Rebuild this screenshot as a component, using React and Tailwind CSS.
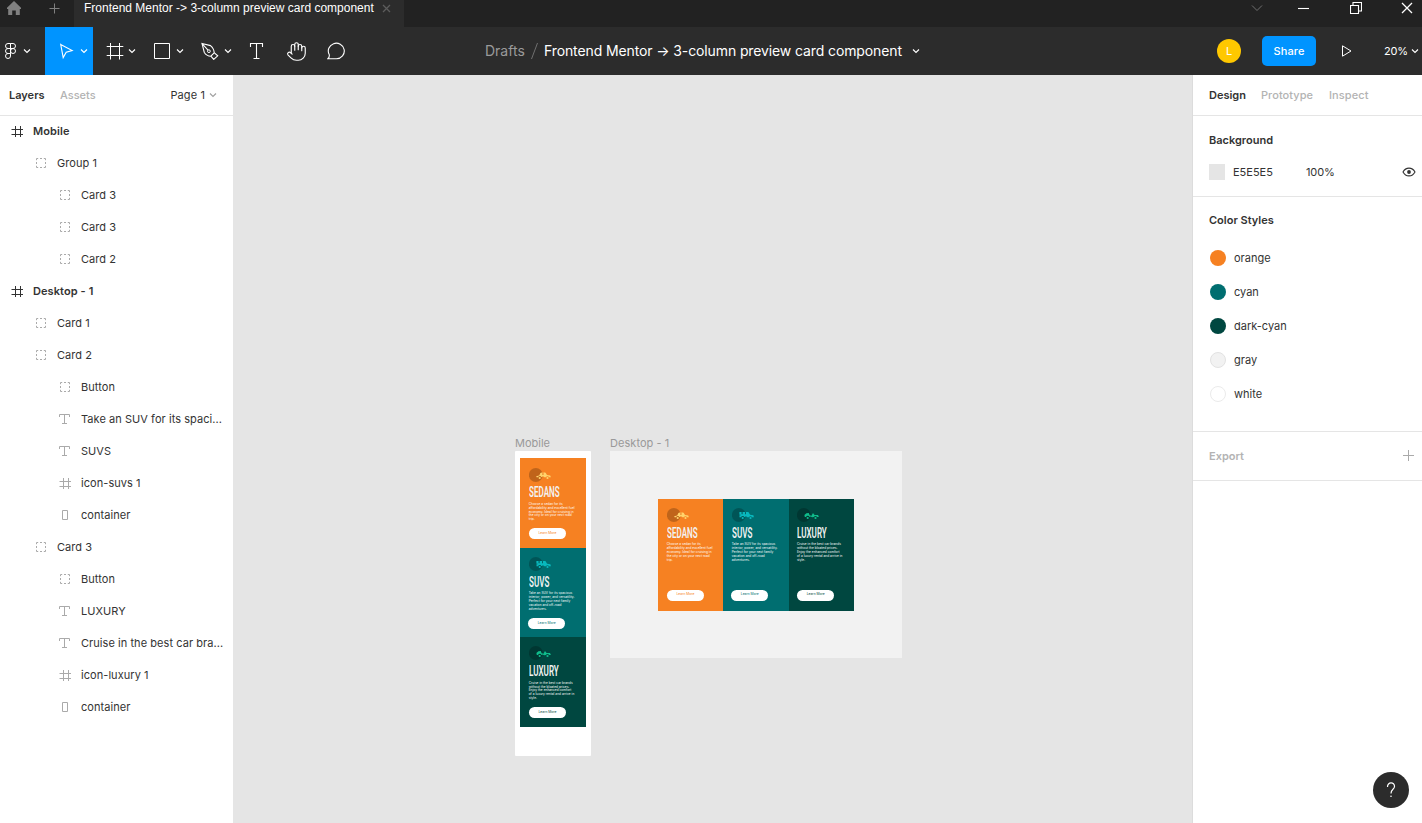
import React from "react";
import { Hand } from "lucide-react";

const Chevron = ({ className = "" }) => (
  <svg className={"shrink-0 " + className} width="8" height="6" viewBox="0 0 8 6" fill="none" stroke="currentColor">
    <path d="M1 1.5 4 4.5 7 1.5" strokeWidth="1.15" />
  </svg>
);

const Tool = ({ className, children }) => (
  <button className={"flex h-12 shrink-0 items-center text-white " + className}>{children}</button>
);

const Icon = ({ w = 18, h = 18, children, className = "" }) => (
  <svg className={"shrink-0 " + className} width={w} height={h} viewBox={`0 0 ${w} ${h}`} fill="none" stroke="currentColor">
    {children}
  </svg>
);

function TitleBar() {
  return (
    <div className="flex h-[27px] shrink-0 bg-[#222222]">
      <div className="flex h-4 w-[74px] items-center text-[#808080]">
        <svg className="ml-[7px]" width="14" height="14" viewBox="0 0 14 14" fill="currentColor">
          <path d="M7 0 0 6.7V8h1.2v6h4V9.5h3.6V14h4V8H14V6.7Z" />
        </svg>
        <Icon w={11} h={11} className="ml-7">
          <path d="M5.5 0.5v10M0.5 5.5h10" />
        </Icon>
      </div>
      <div className="flex h-full w-[330px] bg-[#2c2c2c] pl-[10px]">
        <div className="flex h-4 items-center">
          <span className="w-[290px] whitespace-nowrap font-['Liberation_Sans',sans-serif] text-[12px] leading-4 text-white">
            Frontend Mentor -&gt; 3-column preview card component
          </span>
          <Icon w={9} h={9} className="ml-2 text-[#5c5c5c]">
            <path d="M1 1l7 7M8 1 1 8" strokeWidth="1.3" />
          </Icon>
        </div>
      </div>
      <div className="ml-auto flex h-4 items-center pr-[9px] text-white">
        <Icon w={12} h={8} className="text-[#707070]">
          <path d="M1 1.5 6 6.5l5-5" />
        </Icon>
        <Icon w={11} h={11} className="ml-[35px]">
          <path d="M0 5.5h11" strokeWidth="1.1" />
        </Icon>
        <Icon w={12} h={12} className="ml-[41px]">
          <path d="M0.5 3.5h8v8h-8zM3 3V0.5h8.5V9H9" strokeWidth="1.1" />
        </Icon>
        <Icon w={12} h={12} className="ml-[39px]">
          <path d="M1 1l10 10M11 1 1 11" strokeWidth="1.3" />
        </Icon>
      </div>
    </div>
  );
}

function Toolbar() {
  return (
    <div className="flex h-12 shrink-0 items-center bg-[#2c2c2c]">
      <Tool className="w-[45px] pl-[5px]">
        <Icon w={12} h={18}>
          <path d="M5.5 1.5H3a2.5 2.5 0 0 0 0 5h2.5zM5.5 1.5H8a2.5 2.5 0 0 1 0 5H5.5zM5.5 6.5H3a2.5 2.5 0 0 0 0 5h2.5zM5.5 11.5H3A2.5 2.5 0 1 0 5.5 14z" />
          <circle cx="8" cy="9" r="2.5" />
        </Icon>
        <Chevron className="ml-[6px]" />
      </Tool>
      <Tool className="w-12 bg-[#0094ff] pl-[14px]">
        <Icon w={16} h={18}>
          <path d="M1.7 2.4 13.2 8.6 7.2 10.3 4.2 15.6Z" strokeWidth="1.1" />
        </Icon>
        <Chevron className="ml-[5px]" />
      </Tool>
      <Tool className="w-12 pl-[13px]">
        <Icon>
          <path d="M0.7 4.5h16.6M0.7 13.5h16.6M4.5 1v16.5M13.5 1v16.5" />
        </Icon>
        <Chevron className="ml-1" />
      </Tool>
      <Tool className="w-12 pl-[12px]">
        <Icon>
          <path d="M1.5 1.5h15v15h-15z" />
        </Icon>
        <Chevron className="ml-[5px]" />
      </Tool>
      <Tool className="w-12 pl-[12px]">
        <Icon>
          <path d="M1 1.500 9.5 3.600Q13 6.500 13.200 10.800L9.800 14.200Q5.500 14 3.300 10.500ZM1 1.500l6 6.600M13.400 10.800l3.300 3-4 3.600-2.800-3.200" strokeWidth="1.1" />
          <circle cx="7.900" cy="9.200" r="1.400" />
        </Icon>
        <Chevron className="ml-[5px]" />
      </Tool>
      <Tool className="w-10 pl-[10px]">
        <Icon>
          <path d="M3.5 5V1.5h12V5M9.500 1.500v15M6.500 16.500h6" strokeWidth="1.1" />
        </Icon>
      </Tool>
      <Tool className="w-10 pl-[9px]">
        <Hand size={21} strokeWidth={1.3} />
      </Tool>
      <Tool className="w-10 pl-[10px]">
        <Icon>
          <path d="M.9 16.8c1.1-.9 1.6-2.2 1.4-4A8 7.8 0 1 1 9.5 16.8Z" strokeWidth="1.1" />
        </Icon>
      </Tool>
      <div className="ml-32 flex items-center whitespace-nowrap text-[14px] text-white">
        <span className="w-[40px] -translate-y-px text-[#9a9a9a]">Drafts</span>
        <svg className="ml-[5px]" width="9" height="18" viewBox="0 0 9 18" fill="none" stroke="#707070">
          <path d="M1.5 17 7.5 1" />
        </svg>
        <span className="ml-[5px] w-[360px] -translate-y-px tracking-[-0.115px]">
          Frontend Mentor → 3-column preview card component
        </span>
        <Chevron className="ml-2" />
      </div>
      <div className="ml-auto flex items-center text-[11px] text-white">
        <span className="flex size-6 items-center justify-center rounded-full bg-[#ffc800]">L</span>
        <button className="ml-[21px] flex h-[30px] w-[54px] items-center justify-center rounded-[5px] bg-[#0094ff] font-medium tracking-[0.01em]">
          Share
        </button>
        <Icon w={12} h={14} className="ml-[25px]">
          <path d="M1.500 1.800v10.400L10 7Z" />
        </Icon>
        <span className="ml-[31px] w-[27px] tracking-[-0.02em]">20%</span>
        <Chevron className="mr-[3px]" />
      </div>
    </div>
  );
}

const layerIcons = {
  frame: <path d="M1.500 4.500h11.500M1.500 9.500h11.500M5.500 1v11M10.500 1v11" />,
  group: (
    <path d="M2.5 3.200V1.5H4.200M6 1.5h2M9.800 1.5h1.700V3.200M11.5 5v2M11.5 8.800v1.700H9.800M8 10.5H6M4.200 10.5H2.500V8.800M2.5 7V5" />
  ),
  text: <path d="M1.5 4V1.5h10V4M6.5 1.5v9M4 10.5h5" />,
  rect: <path d="M4.500 1.5h5v9h-5z" />,
};

const layers = [
  ["frame", 0, "Mobile"],
  ["group", 1, "Group 1"],
  ["group", 2, "Card 3"],
  ["group", 2, "Card 3"],
  ["group", 2, "Card 2"],
  ["frame", 0, "Desktop - 1"],
  ["group", 1, "Card 1"],
  ["group", 1, "Card 2"],
  ["group", 2, "Button"],
  ["text", 2, "Take an SUV for its spaci..."],
  ["text", 2, "SUVS"],
  ["frame", 2, "icon-suvs 1"],
  ["rect", 2, "container"],
  ["group", 1, "Card 3"],
  ["group", 2, "Button"],
  ["text", 2, "LUXURY"],
  ["text", 2, "Cruise in the best car bra..."],
  ["frame", 2, "icon-luxury 1"],
  ["rect", 2, "container"],
];

const indents = ["pl-[10px]", "pl-[34px]", "pl-[58px]"];

function LayersPanel() {
  return (
    <aside className="w-[233px] shrink-0 bg-white">
      <div className="flex h-[41px] items-center border-b border-[#e5e5e5] pr-4 pl-[9px]">
        <span className="w-[51px] font-semibold">Layers</span>
        <span className="font-medium text-[#b3b3b3]">Assets</span>
        <span className="ml-auto tracking-[0.01em]">Page 1</span>
        <Chevron className="ml-1 text-[#a0a0a0]" />
      </div>
      <div className="-mt-px">
        {layers.map(([kind, depth, name], i) => (
          <div key={i} className={"flex h-8 items-center whitespace-nowrap " + indents[depth]}>
            <Icon w={14} h={12} className={depth === 0 ? "text-[#333333]" : "text-[#aaaaaa]"}>
              {layerIcons[kind]}
            </Icon>
            <span className={"ml-[9px] " + (depth === 0 ? "font-semibold tracking-[0.008em]" : "tracking-[0.005em]")}>{name}</span>
          </div>
        ))}
      </div>
    </aside>
  );
}

const cards = {
  sedans: {
    title: "SEDANS",
    bg: "bg-[#f68122]",
    ink: "text-[#f68122]",
    car: "#ffd36b",
    lines: ["Choose a sedan for its", "affordability and excellent fuel", "economy. Ideal for cruising in", "the city or on your next road", "trip."],
  },
  suvs: {
    title: "SUVS",
    bg: "bg-[#006e70]",
    ink: "text-[#006e70]",
    car: "#08b8bd",
    lines: ["Take an SUV for its spacious", "interior, power, and versatility.", "Perfect for your next family", "vacation and off-road", "adventures."],
  },
  luxury: {
    title: "LUXURY",
    bg: "bg-[#004740]",
    ink: "text-[#004740]",
    car: "#0fbd8c",
    lines: ["Cruise in the best car brands", "without the bloated prices.", "Enjoy the enhanced comfort", "of a luxury rental and arrive in", "style."],
  },
};

const carBodies = {
  sedans: "M0 4.300 3 3.500 4.200 .9 6.300 .3V2.900H7.300V.3L9.400 .7 10.800 3.100 14 3.500 14.700 5.300H12.900A1.700 1.700 0 0 0 9.700 5.300H8.200L6.800 4.300 5.200 5.300A1.700 1.700 0 0 0 1.900 5.300H.3Z",
  suvs: "M.2 0H2.400V2.300H3.400V0H5.800V2.300H6.800V0H9.200L10.900 2.700 14.200 3.200 14.700 5.300H12.900A1.700 1.700 0 0 0 9.700 5.300H8.200L6.800 4.200 5.200 5.300A1.700 1.700 0 0 0 1.900 5.300H.3V3.300H1.500V2.800H.2Z",
  luxury: "M.2 2.900 2.200 1.300 4.600 .9 5.400 3.200 7.400 3.700 8.400 1.500 9 1.300 10.400 2.900 13.800 2.900 14.700 5.100H12.900A1.700 1.700 0 0 0 9.700 5.100L8 5.300 6.500 4.400 5.200 5.100A1.700 1.700 0 0 0 1.900 5.100H.6Z",
};

function Card({ kind, tall }) {
  const c = cards[kind];
  return (
    <div className={"flex flex-col items-start pl-[8.3px] " + c.bg + (tall ? " h-[112px] w-[65.1px] pt-[9.2px]" : " h-[89.4px] w-[65.3px] pt-[9.2px]")}>
      <svg className="shrink-0" width="23" height="14" viewBox="0 0 23 14">
        <circle cx="6.800" cy="7" r="6.900" fill="#000" fillOpacity="0.22" />
        <g transform="translate(7.200 4)" fill={c.car}>
          <path d={carBodies[kind]} />
          <circle cx="3.500" cy="6" r="1.100" />
          <circle cx="11.300" cy="6" r="1.100" />
        </g>
      </svg>
      <div className="mt-[2.800px] h-[16px] origin-left scale-x-[0.52] whitespace-nowrap font-[Roboto,sans-serif] text-[15.5px] leading-[16px] font-semibold text-[#f2f2f2]">
        {c.title}
      </div>
      <div className="mt-[2.500px] font-[Inter,sans-serif] text-[3.100px] leading-[3.850px] tracking-[0.06px] text-white">
        {c.lines.map((l) => (
          <div key={l} className="whitespace-nowrap">{l}</div>
        ))}
      </div>
      <div
        className={
          "flex h-[11px] w-[37.5px] items-center justify-center rounded-full bg-white font-[Inter,sans-serif] text-[3.300px] leading-none " +
          c.ink +
          (tall ? " mt-[26.8px]" : " mt-[6.3px]") +
          (kind === "suvs" ? " -ml-[0.8px]" : "")
        }
      >
        Learn More
      </div>
    </div>
  );
}

function Canvas() {
  return (
    <main className="relative flex-1 overflow-hidden bg-[#e5e5e5] text-[#999999]">
      <div className="absolute top-[360px] left-[282px] w-[76.4px]">
        <div className="h-4 leading-4">Mobile</div>
        <div className="h-[305px] rounded-[1px] bg-white pt-[7.4px] pl-[5.4px]">
          <Card kind="sedans" />
          <Card kind="suvs" />
          <Card kind="luxury" />
        </div>
      </div>
      <div className="absolute top-[360px] left-[377px] w-[292px]">
        <div className="h-4 leading-4 tracking-[0.005em]">Desktop - 1</div>
        <div className="flex h-[207.4px] items-start bg-[#f2f2f2] pt-[48px] pl-[48.4px]">
          <Card kind="sedans" tall />
          <Card kind="suvs" tall />
          <Card kind="luxury" tall />
        </div>
      </div>
    </main>
  );
}

const styles = [
  ["orange", "bg-[#f68122]"],
  ["cyan", "bg-[#006e70]"],
  ["dark-cyan", "bg-[#004740]"],
  ["gray", "bg-[#f2f2f2] border border-[#e2e2e2]"],
  ["white", "bg-white border border-[#ebebeb]"],
];

function DesignPanel() {
  return (
    <aside className="relative w-[230px] shrink-0 border-l border-[#dcdcdc] bg-white">
      <div className="flex h-[41px] items-center border-b border-[#e5e5e5] pl-4 font-medium text-[#b3b3b3]">
        <span className="w-[52px] font-semibold text-[#333333]">Design</span>
        <span className="w-[68px] tracking-[0.005em]">Prototype</span>
        <span className="tracking-[0.01em]">Inspect</span>
      </div>
      <section className="h-[81px] border-b border-[#e5e5e5] pt-4 pl-4">
        <h2 className="h-4 leading-4 font-semibold">Background</h2>
        <div className="mt-4 flex h-4 items-center">
          <span className="size-4 bg-[#e5e5e5]" />
          <span className="ml-2 w-[73px]">E5E5E5</span>
          <span className="tracking-[-0.01em]">100%</span>
          <Icon w={14} h={10} className="mr-[6px] ml-auto">
            <path d="M1 5C3.800-.2 10.200-.2 13 5 10.200 10.200 3.800 10.200 1 5Z" strokeWidth="1.1" />
            <circle cx="7" cy="5" r="1.900" fill="currentColor" stroke="none" />
          </Icon>
        </div>
      </section>
      <section className="h-[235px] border-b border-[#e5e5e5] pt-[15px] pl-4">
        <h2 className="h-4 leading-4 font-semibold">Color Styles</h2>
        <div className="mt-[13px]">
          {styles.map(([name, cls]) => (
            <div key={name} className="flex h-[34px] items-center pl-px">
              <span className={"size-4 rounded-full " + cls} />
              <span className="ml-2">{name}</span>
            </div>
          ))}
        </div>
      </section>
      <section className="flex h-[49px] items-center border-b border-[#e5e5e5] pr-2 pl-4">
        <h2 className="font-semibold text-[#b3b3b3]">Export</h2>
        <Icon w={11} h={11} className="ml-auto -translate-y-px text-[#aaaaaa]">
          <path d="M5.500 0v11M0 5.500h11" />
        </Icon>
      </section>
      <button className="absolute right-[13px] bottom-[15px] flex size-9 items-center justify-center rounded-full bg-[#2c2c2c] text-white">
        <Icon w={10} h={16}>
          <path d="M1.500 5C1.300-.3 8.700-.3 8.500 4.500 8.400 7.500 5 7.200 5 11.500" strokeWidth="1.200" />
          <circle cx="5" cy="14.200" r=".8" fill="currentColor" stroke="none" />
        </Icon>
      </button>
    </aside>
  );
}

export default function App() {
  return (
    <div className="flex h-screen flex-col overflow-hidden bg-white font-[Inter,sans-serif] text-[11px] text-[#333333]">
      <TitleBar />
      <Toolbar />
      <div className="flex min-h-0 flex-1">
        <LayersPanel />
        <Canvas />
        <DesignPanel />
      </div>
    </div>
  );
}
